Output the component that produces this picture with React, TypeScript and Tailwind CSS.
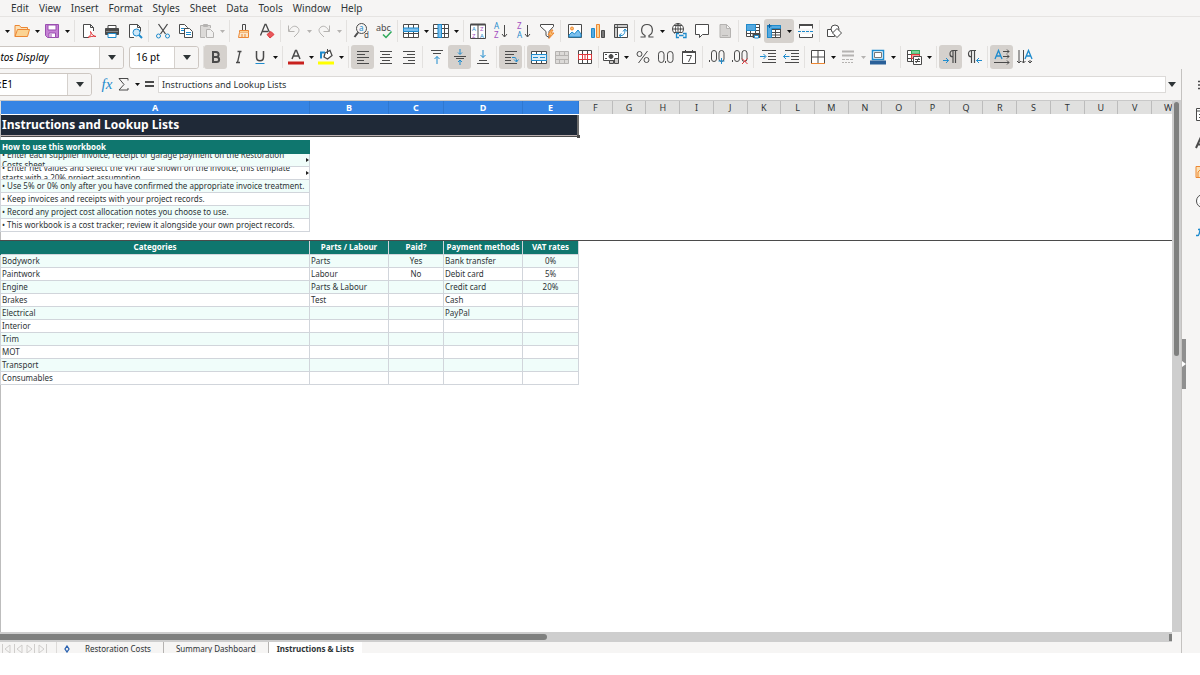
import type { ReactNode } from "react";

const INK = "#4a4a4a";
const BLUE = "#1e8bcd";
const ORANGE = "#ed8733";
const RED = "#e0383c";
const GREY = "#b5b3b1";

function Icon({ children }: { children: ReactNode }) {
  return (
    <svg
      width="16"
      height="16"
      viewBox="0 0 16 16"
      fill="none"
      stroke={INK}
      className="shrink-0 overflow-visible"
      aria-hidden="true"
    >
      {children}
    </svg>
  );
}

function Glyph({
  x,
  y,
  size,
  color = INK,
  children,
}: {
  x: number;
  y: number;
  size: number;
  color?: string;
  children: ReactNode;
}) {
  return (
    <text x={x} y={y} fontSize={size} fill={color} stroke="none">
      {children}
    </text>
  );
}

const icons: Record<string, ReactNode> = {
  open: (
    <>
      <path d="M1 13.5V2.5h4.5l1.5 2h6.5v2" stroke={ORANGE} fill="#fbe0b5" />
      <path d="M1 13.5l2.5-7h12l-2 7z" stroke={ORANGE} fill="#fbd393" />
    </>
  ),
  save: (
    <>
      <path d="M1.5 1.5h13v13h-11l-2-2z" stroke="#9a4fb0" fill="#c581d4" />
      <path d="M4 2h8v5H4z" fill="#fff" stroke="#9a4fb0" />
      <path d="M5 10h6.5v4.5H5z" fill="#fff" stroke="#9a4fb0" />
      <path d="M7 11v3" stroke="#9a4fb0" />
    </>
  ),
  pdf: (
    <>
      <path d="M8 14.5H2.5V1.5h7l3 3V8M9.5 1.5v3h3" fill="#fff" />
      <path d="M7 14.5c3-2 3.5-4 2.5-6 1 3 3 4.5 5.5 5-3-.5-5.5 0-8 1z" stroke={RED} />
    </>
  ),
  print: (
    <>
      <path d="M4 5V2.5h8V5" fill="#fff" />
      <path d="M1.5 5.5h13v6h-13z" fill={INK} />
      <path d="M2 8.5h12" stroke="#8a8a8a" />
      <path d="M4 10.5h8v4H4z" fill="#fff" stroke={BLUE} />
    </>
  ),
  preview: (
    <>
      <path d="M7 14.5H2.5V1.5h8l3 3v4M10.5 1.5v3h3" fill="#fff" />
      <circle cx="9.5" cy="9.5" r="3.5" stroke={BLUE} fill="#cfe8f8" />
      <path d="M12 12l3 3" stroke={BLUE} strokeWidth="2" />
    </>
  ),
  cut: (
    <>
      <path d="M3.5 1l7 10M12.5 1l-7 10" strokeWidth="1.3" />
      <circle cx="3.5" cy="13" r="2" stroke={BLUE} />
      <circle cx="12.5" cy="13" r="2" stroke={BLUE} />
    </>
  ),
  copy: (
    <>
      <path d="M1.5 1.5h5l3 3v6h-8z" fill="#fff" />
      <path d="M3 5.5h4M3 7.5h4" stroke={BLUE} />
      <path d="M6.5 5.5h5l3 3v6h-8z" fill="#fff" />
      <path d="M8 9.5h5M8 11.5h5" stroke={BLUE} />
    </>
  ),
  paste: (
    <>
      <path d="M6 14.5H1.5v-12h10V5M4.5 1.5h4v2h-4z" stroke={GREY} fill="#dcdad8" />
      <path d="M7.5 6.5h4l3 3v5h-7z" stroke={GREY} fill="#f1f0ef" />
    </>
  ),
  clone: (
    <>
      <path d="M6.5 7V1.5h3V7" />
      <path d="M3.5 7.5h9v2h-9z" fill="#fbd393" stroke={ORANGE} />
      <path d="M3.5 9.5l-1 5h10v-5M6 14v-3M9 14v-3" fill="#fbe6c8" stroke={ORANGE} />
    </>
  ),
  clear: (
    <>
      <path d="M1.5 12.5L6 1.5h1l3.5 8M3 8.5h6" strokeWidth="1.3" />
      <path d="M8 11.5l4-3 3 3-4 3.5z" fill="#e8585c" stroke={RED} />
    </>
  ),
  undo: <path d="M2.5 2.5v6h6M3 8c2-4 5-6 8-4 3 2 2.5 5-1 8l-2 2" stroke={GREY} />,
  redo: <path d="M13.5 2.5v6h-6M13 8c-2-4-5-6-8-4-3 2-2.5 5 1 8l2 2" stroke={GREY} />,
  find: (
    <>
      <circle cx="8.5" cy="5.5" r="5" />
      <path d="M5 9.5L1.5 14" strokeWidth="2" />
      <Glyph x={6} y={8} size={8} color={BLUE}>a</Glyph>
      <Glyph x={11} y={15} size={8}>d</Glyph>
    </>
  ),
  spelling: (
    <>
      <Glyph x={0} y={8} size={9}>abc</Glyph>
      <path d="M7 11.5l3 3 5.5-6" stroke="#2faa5a" strokeWidth="1.5" />
    </>
  ),
  row: (
    <>
      <path d="M.5 1.5h15v13H.5zM.5 10.5h15M5.5 1.5v13M10.5 1.5v13" fill="#fff" />
      <path d="M.5 5h15v3.5H.5z" fill="#7cc0ee" stroke={BLUE} />
    </>
  ),
  column: (
    <>
      <path d="M.5 1.5h15v13H.5zM.5 5.5h15M.5 10.5h15M11.5 1.5v13" fill="#fff" />
      <path d="M5 1.5h3.5v13H5z" fill="#7cc0ee" stroke={BLUE} />
    </>
  ),
  sort: (
    <>
      <path d="M.5 1.5h15v14H.5zM8 2v13" fill="#fff" />
      <path d="M.5 1.5h15" strokeWidth="2" />
      <Glyph x={2} y={8} size={6} color={BLUE}>A</Glyph>
      <Glyph x={2} y={15} size={6} color="#a34fc0">Z</Glyph>
      <Glyph x={10} y={8} size={6} color="#a34fc0">Z</Glyph>
      <Glyph x={10} y={15} size={6} color={BLUE}>A</Glyph>
    </>
  ),
  ascending: (
    <>
      <Glyph x={1} y={6} size={8} color={BLUE}>A</Glyph>
      <Glyph x={1} y={15} size={8} color="#a34fc0">Z</Glyph>
      <path d="M11.5 2v11.5M9 11l2.5 3 2.5-3" />
    </>
  ),
  descending: (
    <>
      <Glyph x={1} y={6} size={8} color="#a34fc0">Z</Glyph>
      <Glyph x={1} y={15} size={8} color={BLUE}>A</Glyph>
      <path d="M11.5 2v11.5M9 11l2.5 3 2.5-3" />
    </>
  ),
  filter: (
    <>
      <path d="M1.5 1.5h13v2l-4.5 5v6l-3-2v-4l-5.5-5z" fill="#fff" />
      <path d="M12 7l-3 5h2.5L10 15.500l5-5.5h-3l2-3z" fill="#fbc072" stroke={ORANGE} />
    </>
  ),
  image: (
    <>
      <path d="M1.5 1.5h13v13h-13z" fill="#fff" />
      <circle cx="5" cy="5.5" r="1.5" fill="#fbc072" stroke={ORANGE} />
      <path d="M2 14v-2l3-3 2.5 2L11 7l3 4v3z" fill="#7cc0ee" stroke={BLUE} />
    </>
  ),
  chart: (
    <>
      <path d="M1.5 5.5h3v9h-3z" fill="#55a9e0" stroke={BLUE} />
      <path d="M6.5 1.5h3v13h-3z" fill="#fbd393" stroke={ORANGE} />
      <path d="M11.5 7.5h3v7h-3z" fill="#777" />
    </>
  ),
  pivot: (
    <>
      <path d="M1.5 1.5h13v13h-13zM1.5 4.5h13M4.5 1.5v13" fill="#fff" />
      <path d="M2 3h12M3 5v9" stroke="#9a9a9a" />
      <path
        d="M6.5 12.5c4 .5 5.5-1.5 5.5-6M10 8.5l2-2.5 2 2.5M8.5 10.5l-2.5 2 2.5 2"
        stroke={BLUE}
      />
    </>
  ),
  omega: <path d="M1.5 14H6v-1.5C1 10 1.5 1.5 8 1.5s7 8.500 2 11V14h4.5" strokeWidth="1.2" />,
  link: (
    <>
      <circle cx="7" cy="6" r="5.5" fill="#fff" />
      <path d="M1.5 6h11M7 .5v11M3 2.5h8M3 9.5h8M7 .5C3.5 3 3.5 9 7 11.5M7 .5c3.5 2.5 3.5 8.5 0 11" />
      <path d="M4 10h12v6H4z" fill="#f6f5f4" stroke="none" />
      <path d="M8 10.5H5.5v4H8M12 10.5h3v4h-3M8 12.5h4.5" stroke={BLUE} strokeWidth="1.3" />
    </>
  ),
  comment: <path d="M1.5 1.5h13v10h-6l-3 3v-3h-4z" fill="#fff" />,
  header: (
    <>
      <path d="M3 1.5h6.5l4 4v9H3zM9.5 1.5v4h4" stroke={GREY} fill="#d5d3d1" />
      <path d="M5 12.5h6" stroke={GREY} />
    </>
  ),
  printArea: (
    <>
      <path
        d="M1.5 1.5h13v12h-13zM1.5 4.5h13M1.5 7.5h13M1.5 10.5h13M5.5 1.5v12M10.5 1.5v12"
        fill="#fff"
      />
      <path d="M1.5 1.5h9v6h-9z" fill="#55a9e0" stroke={BLUE} />
      <path d="M8 10.5h7v4H8z" fill={INK} />
      <path d="M9.5 12.5h4V15h-4z" stroke={BLUE} fill="#fff" />
    </>
  ),
  freeze: (
    <>
      <path d="M1.5 2.5h13v12h-13zM1.5 6.5h13M1.5 9.5h13M1.5 12h13M9.5 2.5v12" fill="#fff" />
      <path d="M1.5 2.5h13v3h-9v9h-4z" fill="#55a9e0" stroke={BLUE} />
      <path d="M3.5 1v4M1.5 3h4" stroke="#0c5d99" />
    </>
  ),
  split: (
    <>
      <path d="M1.5 5.5v-4h13v4M1.5 11v3.5h13V11" fill="#fff" />
      <path d="M1 2h14" strokeWidth="2" />
      <path d="M0 8.5h16" stroke={BLUE} strokeDasharray="3 1" />
    </>
  ),
  shapes: (
    <>
      <path d="M1.5 6.5h7v7h-7z" fill="#fff" />
      <circle cx="9" cy="6" r="4" fill="#fff" />
      <path d="M11 5.5l4.5 4.5-4.5 4.5L6.5 10z" fill="#fff" />
    </>
  ),
  bold: <path d="M5 3v10h3.5c3.5 0 3.5-5 0-5H5h3c3.5 0 3.5-5 0-5z" strokeWidth="2" />,
  italic: <path d="M6.5 2.5h4M5 13.5h4M9 2.5L6.5 13.5" strokeWidth="1.3" />,
  underline: (
    <>
      <path d="M4.5 2v6c0 5 7 5 7 0V2" strokeWidth="1.5" />
      <path d="M3.5 14.5h9" stroke={BLUE} />
    </>
  ),
  fontColor: (
    <>
      <path d="M4 10L7.5 1.5h1L12 10M5.5 7h5" strokeWidth="1.5" />
      <path d="M0 14h16" stroke="#c9211e" strokeWidth="3" />
    </>
  ),
  highlight: (
    <>
      <path d="M7 4l5-2.5 2 5L9.5 10 6 8z" fill="#fff" strokeWidth="1.3" />
      <path d="M3 9.5v-6h4" stroke={BLUE} strokeWidth="2" />
      <path d="M9.5 0v5" />
      <path d="M0 14h16" stroke="#ff0" strokeWidth="3" />
    </>
  ),
  left: <path d="M2 2.5h12M2 5.5h8M2 8.5h12M2 11.5h7M2 14.5h12" />,
  center: <path d="M2 2.5h12M4 5.5h8M2 8.5h12M4 11.5h8M2 14.5h12" />,
  right: <path d="M2 2.5h12M6 5.5h8M2 8.5h12M7 11.5h7M2 14.5h12" />,
  top: (
    <>
      <path d="M2 1.5h12M4 4.5h8" />
      <path d="M8 15V7.5M5.5 10L8 7.5l2.5 2.5" stroke={BLUE} />
    </>
  ),
  middle: (
    <>
      <path d="M2 7.5h12M4 9.5h8" />
      <path d="M8 0v5M6 3.5l2 2 2-2M8 16v-4M6 13l2-2 2 2" stroke={BLUE} />
    </>
  ),
  bottom: (
    <>
      <path d="M4 11.5h8M2 14.5h12" />
      <path d="M8 1v7.5M5.5 6L8 8.5 10.5 6" stroke={BLUE} />
    </>
  ),
  wrap: (
    <>
      <path d="M2 2.5h12M2 5.5h9M2 8.5h6M2 11.5h6M2 14.5h12" />
      <path d="M9 8.5h2c2 0 2.5 1 2.5 4M11 10.5l2.5 2.5 2-2.5" stroke={BLUE} />
    </>
  ),
  merge: (
    <>
      <path
        d="M.5 2.5h15v12H.5zM.5 5.5h15M.5 11.5h15M5.5 2.5v3M10.5 2.5v3M5.5 11.5v3M10.5 11.5v3"
        fill="#fff"
      />
      <path d="M.5 5.5h15v6H.5z" stroke={BLUE} fill="#dbeefa" />
      <path d="M2 8.5h5M9 8.5h5" stroke={BLUE} />
    </>
  ),
  mergeGrey: (
    <path
      d="M1.5 2.5h13v12h-13zM1.5 6.5h13M1.5 10.5h13M5.5 2.5v4M10.5 2.5v4M5.5 10.5v4M10.5 10.5v4"
      fill="#dcdad8"
      stroke={GREY}
    />
  ),
  unmerge: (
    <>
      <path d="M1.5 1.5h13v13h-13zM1.5 5.5h13M1.5 10.5h13M5.5 1.5v13M10.5 1.5v13" fill="#fff" />
      <path d="M1.5 5.5h13v5h-13zM5.5 5v6M10.5 5v6M8 5v6" stroke={RED} />
    </>
  ),
  currency: (
    <>
      <path d="M.5 3.5h15v8H.5z" fill="#fff" />
      <circle cx="8" cy="7.5" r="2" fill={INK} />
      <path d="M2 5.5h2M12 5.5h2M2 9.5h2" />
      <path d="M6.5 11.5h4v3h-4zM11.5 9.5h4v5h-4z" fill="#c9c7c5" />
    </>
  ),
  percent: (
    <>
      <circle cx="4.5" cy="5" r="2.5" />
      <circle cx="11.5" cy="11" r="2.5" />
      <path d="M12.5 2l-9 12" />
    </>
  ),
  number: (
    <>
      <rect x=".5" y="2.5" width="5.5" height="11" rx="2.7" />
      <rect x="9.5" y="2.5" width="5.5" height="11" rx="2.7" />
      <path d="M7.5 12v2" />
    </>
  ),
  date: (
    <>
      <path d="M1.5 2.5h13v12h-13zM4.5 1v3M11.5 1v3" fill="#fff" />
      <path d="M1.5 3h13" strokeWidth="2" />
      <path d="M5.5 6.5h5l-3 6.5" />
    </>
  ),
  addDecimal: (
    <>
      <rect x="2.5" y="1.5" width="5" height="11" rx="2.5" />
      <rect x="10" y="1.5" width="5" height="11" rx="2.5" />
      <path d="M.5 11v2" />
      <path d="M12.5 9v6M9.5 12h6" stroke={BLUE} />
    </>
  ),
  removeDecimal: (
    <>
      <rect x="2.5" y="1.5" width="5" height="11" rx="2.5" />
      <rect x="10" y="1.5" width="5" height="11" rx="2.5" />
      <path d="M.5 11v2" />
      <path d="M10 9.5l5.5 5.5M15.5 9.5L10 15" stroke={RED} />
    </>
  ),
  indent: (
    <>
      <path d="M2 1.5h14M8 4.5h8M8 7.5h8M8 10.5h8M2 13.5h14" />
      <path d="M0 7.5h5.5M3.5 5L6 7.5 3.5 10" stroke={BLUE} />
    </>
  ),
  outdent: (
    <>
      <path d="M2 1.5h14M8 4.5h8M8 7.5h8M8 10.5h8M2 13.5h14" />
      <path d="M.5 7.5h6M3 5L.5 7.5 3 10" stroke={BLUE} />
    </>
  ),
  borders: (
    <>
      <path d="M1.5 1.5h13v13h-13zM8 1.5v13M1.5 8h13" fill="#fff" />
      <path d="M1 14.5h14" stroke={ORANGE} />
    </>
  ),
  lineStyle: (
    <>
      <path d="M2 2.5h12M2 6.5h12" stroke={GREY} strokeWidth="2" />
      <path d="M2 10.5h12" stroke={GREY} strokeDasharray="3 1" />
      <path d="M2 13.5h12" stroke={GREY} strokeDasharray="2 1" />
    </>
  ),
  borderColor: (
    <>
      <path d="M2.5 1.5h11v9h-11z" stroke={BLUE} fill="#fff" strokeWidth="1.5" />
      <path d="M4.5 3.5h7v5h-7z" stroke="#777" />
      <path d="M0 13.5h16" stroke="#2a6099" strokeWidth="4" />
    </>
  ),
  conditional: (
    <>
      <path d="M1.5 1.5h12v11h-12zM5.5 1.5v11M1.5 5.5h12M1.5 9.5h12" fill="#fff" />
      <path d="M5.5 1.5h8V5h-8z" fill="#7fd39a" stroke="#2faa5a" />
      <path d="M5.5 5.5h8v4h-8z" fill="#f5a0a0" stroke={RED} />
      <path d="M7.5 7.5h8v8h-8z" fill="#fff" />
      <path d="M9 10.5h5M9 12.5h5M13 9l-3 5" />
    </>
  ),
  ltr: (
    <>
      <path d="M14.5 1.5H10c-4 0-4 6.5 0 6.5v6M12.5 1.5V14M10 2v6" strokeWidth="1.2" />
      <path d="M0 11.5h5.5M3 9l2.5 2.500L3 14" stroke={BLUE} />
    </>
  ),
  rtl: (
    <>
      <path d="M10 1.5H5.5c-4 0-4 6.5 0 6.5v6M8.5 1.5V14M5.5 2v6" strokeWidth="1.2" />
      <path d="M10.5 11.5H16M13 9l-2.5 2.5L13 14" stroke={BLUE} />
    </>
  ),
  textHorizontal: (
    <>
      <path d="M1 10l3.5-8.5L8 10M2.5 7h4" stroke={BLUE} strokeWidth="1.3" />
      <path d="M9 2.5h6M13 .5l2 2-2 2M9 7.5h6M13 5.5l2 2-2 2M0 13.5h15M13 11.5l2 2-2 2" />
    </>
  ),
  textVertical: (
    <>
      <path d="M8 10l3.5-8.5L15 10M9.5 7h4" stroke={BLUE} strokeWidth="1.3" />
      <path d="M2 1v13M0 12l2 2 2-2M6.5 1v13M4.5 12l2 2 2-2M13 11v3M11 12l2 2 2-2" />
    </>
  ),
};

const iconButton =
  "flex h-6 items-center justify-center rounded-[3px] shrink-0";

function Tool({ name, active = false }: { name: string; active?: boolean }) {
  return (
    <button
      type="button"
      aria-label={name}
      className={`${iconButton} w-[23px] ${active ? "bg-[#d5d1cd]" : ""}`}
    >
      <Icon>{icons[name]}</Icon>
    </button>
  );
}

function Caret({ muted = false }: { muted?: boolean }) {
  return (
    <svg width="5" height="3" viewBox="0 0 5 3" aria-hidden="true">
      <path d="M0 0h5L2.5 3z" fill={muted ? GREY : "#111"} />
    </svg>
  );
}

function WideCaret() {
  return (
    <svg width="8" height="5" viewBox="0 0 8 5" aria-hidden="true">
      <path d="M0 0h8L4 5z" fill="#2e3436" />
    </svg>
  );
}

function SplitTool({
  name,
  active = false,
  muted = false,
}: {
  name: string;
  active?: boolean;
  muted?: boolean;
}) {
  return (
    <div
      className={`flex shrink-0 rounded-[3px] ${active ? "bg-[#d5d1cd]" : ""}`}
    >
      <button type="button" aria-label={name} className={`${iconButton} w-5`}>
        <Icon>{icons[name]}</Icon>
      </button>
      <button
        type="button"
        aria-label={`${name} options`}
        className={`${iconButton} w-[10px]`}
      >
        <Caret muted={muted} />
      </button>
    </div>
  );
}

function Group({
  children,
  className = "px-[2px]",
}: {
  children: ReactNode;
  className?: string;
}) {
  return (
    <div
      className={`flex h-[22px] shrink-0 items-center border-r border-[#e3e1df] ${className}`}
    >
      {children}
    </div>
  );
}

function ComboArrow() {
  return (
    <span className="pointer-events-none absolute inset-y-px right-px flex w-6 items-center justify-center rounded-r-[3px] border-l border-[#d5d1cd] bg-[#f6f5f4]">
      <WideCaret />
    </span>
  );
}

function MenuBar() {
  const menus = [
    "Edit",
    "View",
    "Insert",
    "Format",
    "Styles",
    "Sheet",
    "Data",
    "Tools",
    "Window",
    "Help",
  ];
  return (
    <nav className="flex h-[17px] items-center gap-[10px] border-b border-[#e6e4e2] pl-[11px] text-[10px]">
      {menus.map((menu) => (
        <button key={menu} type="button">
          {menu}
        </button>
      ))}
    </nav>
  );
}

function StandardToolbar() {
  return (
    <div className="flex h-7 items-center">
      <Group className="pr-[2px]">
        <button
          type="button"
          aria-label="new options"
          className={`${iconButton} w-3 pl-[2px]`}
        >
          <Caret />
        </button>
        <SplitTool name="open" />
        <SplitTool name="save" />
      </Group>
      <Group>
        <Tool name="pdf" />
        <Tool name="print" />
        <Tool name="preview" />
      </Group>
      <Group>
        <Tool name="cut" />
        <Tool name="copy" />
        <SplitTool name="paste" muted />
      </Group>
      <Group>
        <Tool name="clone" />
        <Tool name="clear" />
      </Group>
      <Group className="pr-[2px] pl-[3px]">
        <SplitTool name="undo" muted />
        <SplitTool name="redo" muted />
      </Group>
      <Group>
        <Tool name="find" />
        <Tool name="spelling" />
      </Group>
      <Group className="pr-[2px] pl-[3px]">
        <SplitTool name="row" />
        <SplitTool name="column" />
      </Group>
      <Group>
        <Tool name="sort" />
        <Tool name="ascending" />
        <Tool name="descending" />
        <Tool name="filter" />
      </Group>
      <Group>
        <Tool name="image" />
        <Tool name="chart" />
        <Tool name="pivot" />
      </Group>
      <Group>
        <SplitTool name="omega" />
        <Tool name="link" />
        <Tool name="comment" />
        <Tool name="header" />
      </Group>
      <Group>
        <Tool name="printArea" />
        <SplitTool name="freeze" active />
        <Tool name="split" />
      </Group>
      <div className="pl-[2px]">
        <Tool name="shapes" />
      </div>
    </div>
  );
}

function FormattingToolbar() {
  return (
    <div className="flex h-6 items-center">
      <div className="relative -ml-[14px] shrink-0">
        <select
          aria-label="Font name"
          className="block h-[23px] w-[138px] appearance-none rounded-[3px] border border-[#cdc7c2] bg-white pl-[2px] text-[10px] text-black italic"
        >
          <option>Aptos Display</option>
        </select>
        <ComboArrow />
      </div>
      <div className="relative ml-[5px] shrink-0">
        <select
          aria-label="Font size"
          className="block h-[23px] w-[70px] appearance-none rounded-[3px] border border-[#cdc7c2] bg-white pl-[6px] text-[10px] text-black"
        >
          <option>16 pt</option>
        </select>
        <ComboArrow />
      </div>
      <Group className="ml-1 border-l pr-[2px]">
        <Tool name="bold" active />
        <Tool name="italic" />
        <SplitTool name="underline" />
      </Group>
      <Group className="pr-[2px] pl-[3px]">
        <SplitTool name="fontColor" />
        <SplitTool name="highlight" />
      </Group>
      <Group>
        <Tool name="left" active />
        <Tool name="center" />
        <Tool name="right" />
      </Group>
      <Group>
        <Tool name="top" />
        <Tool name="middle" active />
        <Tool name="bottom" />
      </Group>
      <Group>
        <Tool name="wrap" active />
      </Group>
      <Group>
        <Tool name="merge" active />
        <Tool name="mergeGrey" />
        <Tool name="unmerge" />
      </Group>
      <Group>
        <SplitTool name="currency" />
        <Tool name="percent" />
        <Tool name="number" />
        <Tool name="date" />
      </Group>
      <Group>
        <Tool name="addDecimal" />
        <Tool name="removeDecimal" />
      </Group>
      <Group>
        <Tool name="indent" />
        <Tool name="outdent" />
      </Group>
      <Group className="pr-[2px] pl-[3px]">
        <SplitTool name="borders" />
        <SplitTool name="lineStyle" muted />
        <SplitTool name="borderColor" />
      </Group>
      <Group className="pr-[2px] pl-[3px]">
        <SplitTool name="conditional" />
      </Group>
      <Group>
        <Tool name="ltr" active />
        <Tool name="rtl" />
      </Group>
      <div className="flex pl-[2px]">
        <Tool name="textHorizontal" active />
        <Tool name="textVertical" />
      </div>
    </div>
  );
}

function FormulaBar() {
  return (
    <div className="flex h-[31px] items-center pb-px">
      <div className="relative -ml-4 shrink-0">
        <input
          aria-label="Name box"
          defaultValue="A1:E1"
          className="block h-[23px] w-[108px] rounded-[3px] border border-[#cdc7c2] bg-white pl-[2px] text-[10px] text-black"
        />
        <ComboArrow />
      </div>
      <div className="flex shrink-0 items-center pl-[6px]">
        <button
          type="button"
          aria-label="Function wizard"
          className="w-[18px] font-['Liberation_Serif',serif] text-[15px] leading-4 text-[#1e8bcd] italic"
        >
          fx
        </button>
        <button type="button" aria-label="Sum" className="w-4">
          <Icon>
            <path d="M12 4.5v-2H3l5 6-5 5.5h9v-2" />
          </Icon>
        </button>
        <button
          type="button"
          aria-label="Sum options"
          className="flex w-[10px] items-center justify-center"
        >
          <Caret />
        </button>
        <button type="button" aria-label="Formula" className="w-4">
          <Icon>
            <path d="M3 6h9M3 10h9" strokeWidth="2" />
          </Icon>
        </button>
      </div>
      <input
        aria-label="Formula input"
        defaultValue="Instructions and Lookup Lists"
        className="h-[17px] min-w-0 flex-1 border border-[#dcdad8] bg-white px-[3px] text-[9px]"
      />
      <button
        type="button"
        aria-label="Expand formula bar"
        className="flex w-3 shrink-0 items-center justify-center"
      >
        <WideCaret />
      </button>
      <span className="w-[3px] shrink-0" />
    </div>
  );
}

function ColumnHeaders() {
  const cell =
    "flex items-center justify-center border-r text-[9px] leading-none";
  const picked = `${cell} border-[#2f78d0] bg-[#3584e4] font-bold text-white`;
  return (
    <div className="flex h-[14px] shrink-0 border-t border-[#c8c8c8] bg-[#e0e0df] pl-px">
      <div className={`${picked} w-[309px]`}>A</div>
      <div className={`${picked} w-[79px]`}>B</div>
      <div className={`${picked} w-[55px]`}>C</div>
      <div className={`${picked} w-[79px]`}>D</div>
      <div className={`${picked} w-[56px]`}>E</div>
      {"FGHIJKLMNOPQRSTUV".split("").map((letter) => (
        <div key={letter} className={`${cell} flex-1 border-[#bcbcbc]`}>
          {letter}
        </div>
      ))}
      <div className="w-5 shrink-0 overflow-hidden pl-3 text-[9px] leading-[13px]">
        W
      </div>
    </div>
  );
}

const guide = [
  "• Enter each supplier invoice, receipt or garage payment on the Restoration Costs sheet.",
  "• Enter net values and select the VAT rate shown on the invoice; this template starts with a 20% project assumption.",
  "• Use 5% or 0% only after you have confirmed the appropriate invoice treatment.",
  "• Keep invoices and receipts with your project records.",
  "• Record any project cost allocation notes you choose to use.",
  "• This workbook is a cost tracker; review it alongside your own project records.",
];

function GuideTable() {
  return (
    <table className="w-[310px] table-fixed border-collapse text-[8px]">
      <thead>
        <tr className="h-[13px] bg-[#0f766e] text-left leading-[12px] text-white">
          <th className="border border-[#0f766e] py-0 pr-0 pl-px">How to use this workbook</th>
        </tr>
      </thead>
      <tbody>
        {guide.map((line, index) => (
          <tr key={line} className="h-[13px] odd:bg-[#f0fdfa]">
            <td className="border border-[#d1d5db] py-0 pr-0 pl-px">
              <div className="flex h-3 items-center overflow-hidden">
                <p className="flex-1 leading-[10px]">{line}</p>
                {index < 2 && (
                  <svg width="3" height="4" viewBox="0 0 3 4" aria-hidden="true">
                    <path d="M0 0l3 2-3 2z" fill="#222" />
                  </svg>
                )}
              </div>
            </td>
          </tr>
        ))}
      </tbody>
    </table>
  );
}

const titles = ["Categories", "Parts / Labour", "Paid?", "Payment methods", "VAT rates"];

const lists = [
  ["Bodywork", "Parts", "Yes", "Bank transfer", "0%"],
  ["Paintwork", "Labour", "No", "Debit card", "5%"],
  ["Engine", "Parts & Labour", "", "Credit card", "20%"],
  ["Brakes", "Test", "", "Cash", ""],
  ["Electrical", "", "", "PayPal", ""],
  ["Interior", "", "", "", ""],
  ["Trim", "", "", "", ""],
  ["MOT", "", "", "", ""],
  ["Transport", "", "", "", ""],
  ["Consumables", "", "", "", ""],
];

function LookupTable() {
  return (
    <table className="w-[579px] table-fixed border-collapse text-[8px] leading-[12px]">
      <colgroup>
        <col className="w-[309px]" />
        <col className="w-[79px]" />
        <col className="w-[55px]" />
        <col className="w-[79px]" />
        <col className="w-[56px]" />
      </colgroup>
      <thead>
        <tr className="h-[13px] bg-[#0f766e] whitespace-nowrap text-white">
          {titles.map((title) => (
            <th
              key={title}
              className="border-x border-[#d1d5db] p-0 first:border-l-[#0f766e]"
            >
              {title}
            </th>
          ))}
        </tr>
      </thead>
      <tbody>
        {lists.map((row) => (
          <tr key={row[0]} className="h-[13px] odd:bg-[#f0fdfa]">
            {row.map((value, index) => (
              <td
                key={index}
                className={`border border-[#d1d5db] py-0 pr-0 ${
                  index === 2 || index === 4 ? "pl-0 text-center" : "pl-px"
                }`}
              >
                {value}
              </td>
            ))}
          </tr>
        ))}
      </tbody>
    </table>
  );
}

function Sheet() {
  return (
    <div className="flex min-w-0 flex-1 flex-col overflow-hidden bg-white">
      <ColumnHeaders />
      <div className="flex-1 border-l border-[#bdbdbd]">
        <div className="relative w-[578px] border-b border-[#4b4b4b] pt-px">
          <h1 className="border-r-2 border-b border-r-[#6b6b6b] border-b-[#b9adad] bg-[#1f2937] pl-px text-[12px] leading-[20px] font-bold text-white">
            Instructions and Lookup Lists
          </h1>
          <span className="absolute -right-px -bottom-[2px] size-[3px] bg-[#4b4b4b]" />
        </div>
        <div className="-ml-px pt-[3px]">
          <GuideTable />
          <div className="mt-2 border-t border-[#4b4b4b]">
            <LookupTable />
          </div>
        </div>
      </div>
    </div>
  );
}

function SheetTabs() {
  return (
    <div className="flex h-[11px] items-start overflow-hidden bg-[#f6f5f4] text-[8px] leading-[14px]">
      <div className="flex w-12 shrink-0 justify-end gap-px pt-[2px]">
        {["First sheet", "Previous sheet", "Next sheet", "Last sheet"].map((label, index) => (
          <button key={label} type="button" aria-label={label}>
            <svg width="11" height="10" viewBox="0 0 11 10" fill="none" stroke="#cfcdcb">
              <path d={index < 2 ? "M1.5 0v10M9 1L4 5l5 4z" : "M9.5 0v10M2 1l5 4-5 4z"} />
            </svg>
          </button>
        ))}
      </div>
      <button
        type="button"
        aria-label="Add sheet"
        className="ml-2 flex w-[21px] shrink-0 justify-center border-l border-[#dcdad8] pt-[3px]"
      >
        <svg width="6" height="8" viewBox="0 0 6 8" fill="none" stroke="#2a62b0">
          <path d="M3 1l2 3-2 3-2-3z" strokeWidth="1.3" />
        </svg>
      </button>
      <button type="button" className="shrink-0 pr-3 pl-2">
        Restoration Costs
      </button>
      <button type="button" className="shrink-0 border-x border-[#b5b3b1] px-3">
        Summary Dashboard
      </button>
      <button type="button" className="h-full shrink-0 bg-white px-2 font-bold">
        Instructions &amp; Lists
      </button>
    </div>
  );
}

function Sidebar() {
  return (
    <aside className="flex w-[19px] shrink-0 overflow-hidden border-l border-[#c4c2c0]">
      <button
        type="button"
        aria-label="Hide sidebar"
        className="mt-[6px] flex h-[50px] w-[4px] shrink-0 items-center self-center bg-[#8f8f8f]"
      >
        <svg width="4" height="6" viewBox="0 0 4 6" aria-hidden="true">
          <path d="M0 0l4 3-4 3z" fill="#fff" />
        </svg>
      </button>
      <div className="flex flex-col gap-[13px] pt-2 pl-[9px]">
        <Icon>
          <path d="M3 4.5h11M3 8h11M3 11.5h11" strokeWidth="1.5" />
        </Icon>
        <Icon>
          <path d="M1.5 2.5h13v12h-13zM1.5 5h13M4 8.5h4M4 11.5h4" fill="#fff" />
        </Icon>
        <Icon>
          <path d="M1 13L6 2l5 11M3 9.5h6" strokeWidth="2" />
        </Icon>
        <Icon>
          <path d="M1 2.5h14v11H1zM3 13V8l3-3h9" stroke={ORANGE} fill="#fbe0b5" />
        </Icon>
        <Icon>
          <circle cx="8" cy="8" r="6.5" fill="#fff" />
          <path d="M5 11l2-4 4-2-2 4z" />
        </Icon>
        <Icon>
          <path d="M1 13.5h2c2 0 2-11 5-11M3 7.5h6" stroke={BLUE} strokeWidth="1.5" />
        </Icon>
      </div>
    </aside>
  );
}

export default function App() {
  return (
    <div className="h-screen overflow-hidden bg-white pb-[22px] font-['Noto_Sans',sans-serif] text-[#2e3436]">
      <div className="flex h-full flex-col bg-[#f6f5f4]">
        <MenuBar />
        <StandardToolbar />
        <FormattingToolbar />
        <div className="flex min-h-0 flex-1">
          <main className="flex min-w-0 flex-1 flex-col">
            <FormulaBar />
            <div className="flex min-h-0 flex-1">
              <Sheet />
              <div className="w-[9px] shrink-0 bg-[#cecece] px-[2px] pt-[2px]">
                <div className="h-[48%] rounded-full bg-[#7f807f]" />
              </div>
            </div>
            <div className="mr-[9px] flex h-[10px] shrink-0 items-center justify-between bg-[#cecece]">
              <div className="h-[6px] w-7/15 rounded-r-full bg-[#7f807f]" />
              <div className="h-[7px] w-[3px] bg-[#7f807f]" />
            </div>
            <SheetTabs />
          </main>
          <Sidebar />
        </div>
      </div>
    </div>
  );
}
